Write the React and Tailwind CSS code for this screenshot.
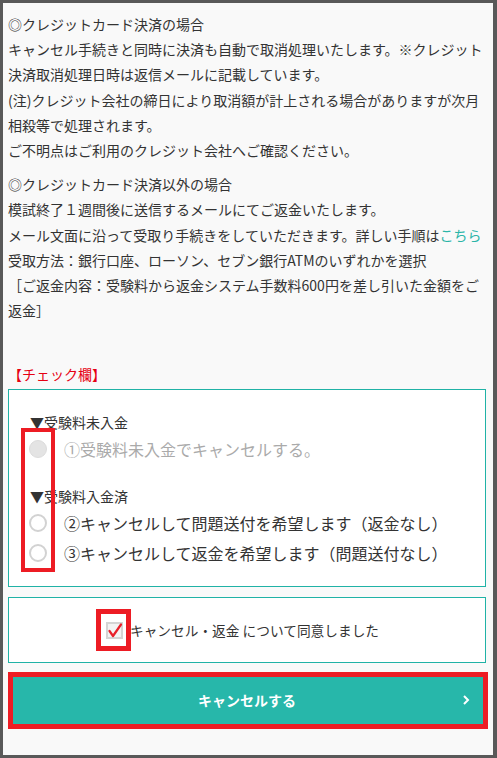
import React from 'react'

const font = { fontFamily: '"Noto Sans CJK JP", "Noto Sans", sans-serif' }

const Radio = ({ disabled }) => (
  <span
    className={
      disabled
        ? 'block w-[18px] h-[18px] rounded-full bg-[#e4e4e4] border border-[#dcdcdc]'
        : 'block w-[18px] h-[18px] rounded-full bg-white border-2 border-[#d2d2d2]'
    }
  />
)

const Option = ({ label, disabled }) => (
  <div className="flex items-center h-[30px]">
    <div className="w-[36px] pl-[20px]">
      <Radio disabled={disabled} />
    </div>
    <span className={'ml-[19px] text-[16px] ' + (disabled ? 'text-[#aaaaaa]' : 'text-[#333333]')}>{label}</span>
  </div>
)

const App = () => {
  return (
    <div className="h-[758px] bg-[#595959] pt-[3px] pl-[3px] pr-[4px] pb-[3px]" style={font}>
      <div className="h-full bg-[#f9f9f9] pl-[5px] pr-[7px] pt-[9px] text-[14px] leading-[25.2px] text-[#333333]">
        <p className="mb-[9px]">
          ◎クレジットカード決済の場合<br />
          キャンセル手続きと同時に決済も自動で取消処理いたします。※クレジット決済取消処理日時は返信メールに記載しています。<br />
          (注)クレジット会社の締日により取消額が計上される場合がありますが次月相殺等で処理されます。<br />
          ご不明点はご利用のクレジット会社へご確認ください。
        </p>
        <p>
          ◎クレジットカード決済以外の場合<br />
          模試終了１週間後に送信するメールにてご返金いたします。<br />
          メール文面に沿って受取り手続きをしていただきます。詳しい手順は<a href="#" className="text-[#2bb5a8]">こちら</a><br />
          受取方法：銀行口座、ローソン、セブン銀行ATMのいずれかを選択<br />
          ［ご返金内容：受験料から返金システム手数料600円を差し引いた金額をご返金］
        </p>

        <div className="mt-[39px] h-[25px] leading-[25px] text-[14px] text-[#e60012]">【チェック欄】</div>

        <div className="relative mt-[2px] border border-[#20b2a6] bg-white pt-[20px] pb-[18px]">
          <div className="pl-[21px] h-[24px] leading-[24px]">▼受験料未入金</div>
          <Option label="①受験料未入金でキャンセルする。" disabled />
          <div className="mt-[20px] pl-[21px] h-[24px] leading-[24px]">▼受験料入金済</div>
          <Option label="②キャンセルして問題送付を希望します（返金なし）" />
          <Option label="③キャンセルして返金を希望します（問題送付なし）" />
          <div className="absolute left-[12px] top-[38px] w-[34px] h-[144px] border-[4px] border-[#ed1c24]" />
        </div>

        <div className="mt-[10px] h-[66px] border border-[#20b2a6] bg-white flex items-center justify-center pr-[9px]">
          <div className="relative w-[17px] h-[17px]">
            <svg width="17" height="17" viewBox="0 0 17 17" className="block">
              <rect x="1" y="1" width="15" height="15" fill="#f3f3f3" stroke="#d4d4d4" strokeWidth="2" />
              <path d="M3.5 9 L7 14 L15 2.5" fill="none" stroke="#e8202a" strokeWidth="2.2" strokeLinecap="round" strokeLinejoin="round" />
            </svg>
            <div className="absolute -left-[10px] -top-[13px] w-[35px] h-[42px] border-[5px] border-[#ed1c24]" />
          </div>
          <span className="ml-[7px] text-[13.7px]">キャンセル・返金 について同意しました</span>
        </div>

        <div className="relative mt-[9px]">
          <button className="w-full h-[57px] bg-[#27b7aa] text-white text-[14px] font-bold flex items-center justify-center relative">
            キャンセルする
            <svg width="8" height="12" viewBox="0 0 8 12" className="absolute right-[16px] top-[22px]">
              <path d="M2 2 L6 6 L2 10" fill="none" stroke="white" strokeWidth="2" />
            </svg>
          </button>
          <div className="absolute top-0 bottom-0 left-0 -right-[2px] border-[5px] border-[#ed1c24]" />
        </div>
      </div>
    </div>
  )
}

export default App
